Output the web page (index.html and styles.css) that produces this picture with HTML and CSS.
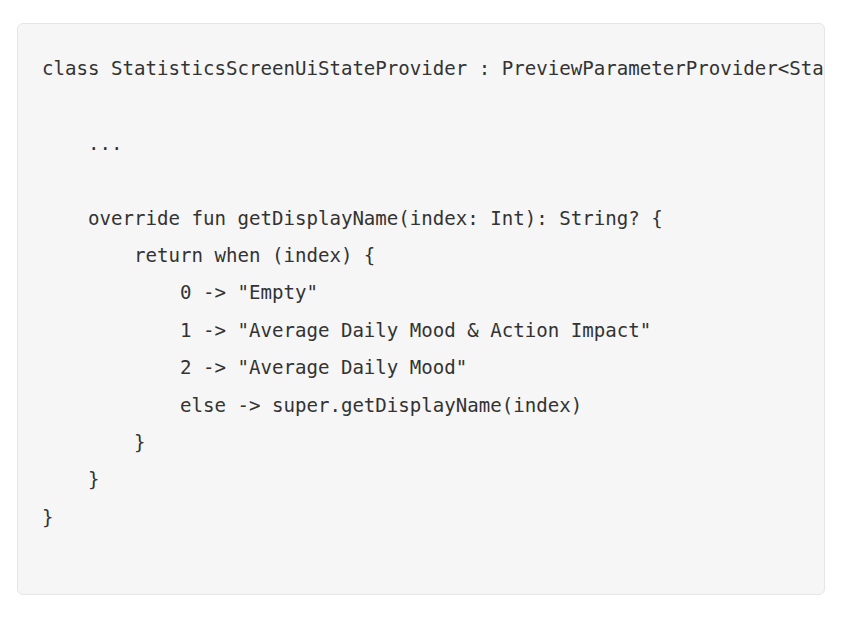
FILE: index.html
```html
<!DOCTYPE html>
<html lang="en">
<head>
<meta charset="utf-8">
<title>Code</title>
<link rel="stylesheet" href="styles.css">
</head>
<body>
<div class="page">
<pre class="code-block"><code>class StatisticsScreenUiStateProvider : PreviewParameterProvider&lt;StatisticsScreenUiState&gt; {

    ...

    override fun getDisplayName(index: Int): String? {
        return when (index) {
            0 -&gt; "Empty"
            1 -&gt; "Average Daily Mood &amp; Action Impact"
            2 -&gt; "Average Daily Mood"
            else -&gt; super.getDisplayName(index)
        }
    }
}</code></pre>
</div>
</body>
</html>
```

FILE: styles.css
```css
html, body {
  margin: 0;
  padding: 0;
  background: #ffffff;
}

.page {
  padding: 23px 22px 0 17px;
}

.code-block {
  margin: 0;
  box-sizing: border-box;
  width: 808px;
  height: 572px;
  background: #f6f6f6;
  border: 1px solid #e6e6e6;
  border-radius: 6px;
  padding: 26px 24px 0 24px;
  overflow: hidden;
  font-family: "DejaVu Sans Mono", "Liberation Mono", monospace;
  font-size: 19.1px;
  line-height: 37.4px;
  color: #333333;
  white-space: pre;
}

.code-block code {
  font: inherit;
}
```
